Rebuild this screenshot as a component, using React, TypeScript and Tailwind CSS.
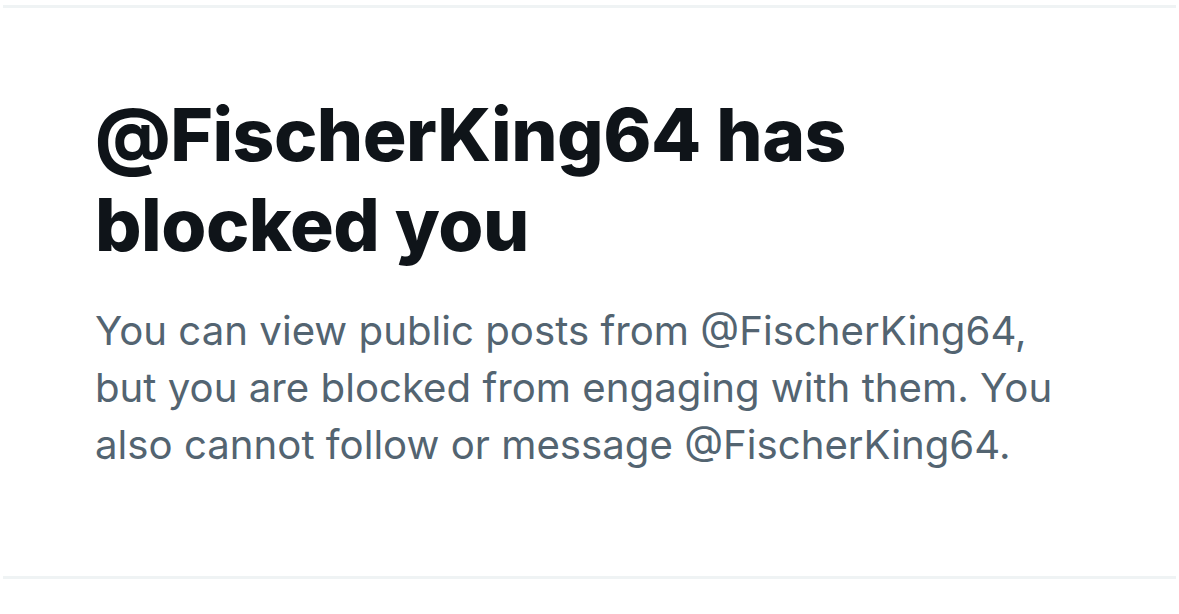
export default function App() {
  return (
    <div className="w-[1179px] h-[614px] bg-white pt-[5px]" style={{ fontFamily: "Inter, 'Noto Sans', sans-serif" }}>
      <div className="mx-[3px] h-[3px] bg-[#eff3f4]" />
      <div className="pl-[95px] pr-[95px] pt-[82px] h-[568px]">
        <h1 className="text-[73px] leading-[90px] font-extrabold text-[#0f1419] tracking-[-0.5px]">
          @FischerKing64 has blocked you
        </h1>
        <p className="mt-[32px] text-[40.2px] leading-[57px] text-[#536471]">
          You can view public posts from @FischerKing64, but you are blocked from engaging with them. You also cannot follow or message @FischerKing64.
        </p>
      </div>
      <div className="mx-[3px] h-[3px] bg-[#eff3f4]" />
    </div>
  );
}
